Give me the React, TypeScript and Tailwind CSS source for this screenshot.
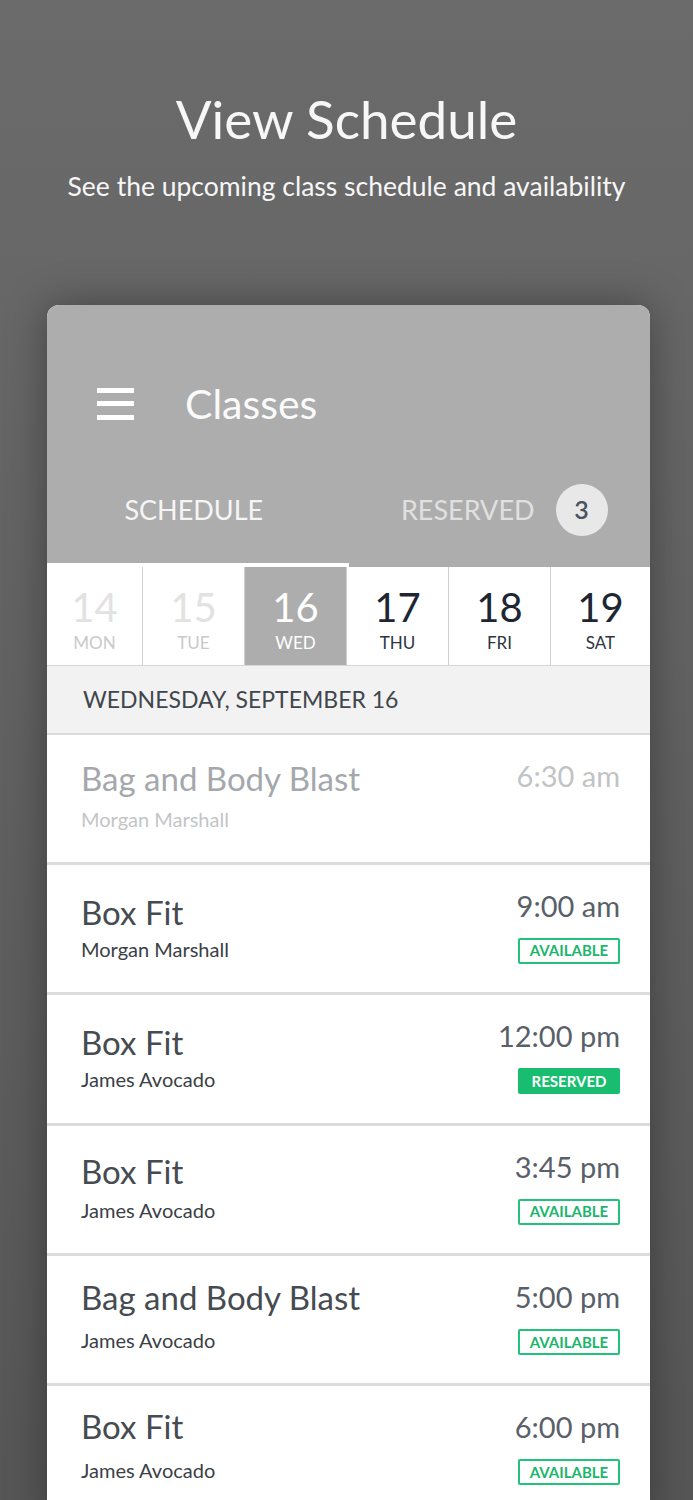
import { Fragment } from "react";

const days = [
  { n: "14", d: "MON", state: "past" },
  { n: "15", d: "TUE", state: "past" },
  { n: "16", d: "WED", state: "active" },
  { n: "17", d: "THU", state: "next" },
  { n: "18", d: "FRI", state: "next" },
  { n: "19", d: "SAT", state: "next" },
];

const classes = [
  { title: "Bag and Body Blast", coach: "Morgan Marshall", time: "6:30 am", status: "done", titleCls: "mt-[27px]", coachCls: "mt-[14px]" },
  { title: "Box Fit", coach: "Morgan Marshall", time: "9:00 am", status: "available", titleCls: "mt-[31px]", coachCls: "mt-[10px]" },
  { title: "Box Fit", coach: "James Avocado", time: "12:00 pm", status: "reserved", titleCls: "mt-[31px]", coachCls: "mt-[10px]" },
  { title: "Box Fit", coach: "James Avocado", time: "3:45 pm", status: "available", titleCls: "mt-[29px]", coachCls: "mt-[12px]" },
  { title: "Bag and Body Blast", coach: "James Avocado", time: "5:00 pm", status: "available", titleCls: "mt-[25px]", coachCls: "mt-[16px]" },
  { title: "Box Fit", coach: "James Avocado", time: "6:00 pm", status: "available", titleCls: "mt-[24px]", coachCls: "mt-[17px]" },
];

const DayCell = ({ n, d, state, last }: { n: string; d: string; state: string; last: boolean }) => {
  const bg = state === "active" ? "bg-[#adadad]" : "bg-white";
  const num =
    state === "past" ? "text-[#e2e2e2]" : state === "active" ? "text-white" : "text-[#1e2633]";
  const lbl =
    state === "past" ? "text-[#c9c9c9]" : state === "active" ? "text-white" : "text-[#2f3540]";
  return (
    <div className={`flex flex-col items-center pt-[20px] ${bg} ${last ? "" : "border-r border-[#d0d0d0]"}`}>
      <span className={`text-[40px] leading-none ${num}`}>{n}</span>
      <span className={`mt-[7px] text-[17px] leading-none ${lbl}`}>{d}</span>
    </div>
  );
};

const ClassRow = ({ c }: { c: (typeof classes)[number] }) => {
  const dim = c.status === "done";
  return (
    <div className="flex h-[130.4px] justify-between border-b-[3px] border-[#dcdcdc] bg-white pl-[34px] pr-[30px]">
      <div className="flex flex-col">
        <span className={`${c.titleCls} text-[33px] leading-none ${dim ? "text-[#a4a8ac]" : "text-[#454b51]"}`}>
          {c.title}
        </span>
        <span className={`${c.coachCls} text-[20px] leading-none ${dim ? "text-[#c3c5c7]" : "text-[#3a4046]"}`}>
          {c.coach}
        </span>
      </div>
      <div className="flex flex-col items-end">
        <span className={`mt-[26px] text-[29px] leading-none ${dim ? "text-[#c1c3c5]" : "text-[#596068]"}`}>
          {c.time}
        </span>
        {c.status === "available" && (
          <span className="mt-[18px] flex h-[26px] w-[102px] items-center justify-center rounded-[2px] border-2 border-[#22c27a] text-[15px] font-bold leading-none text-[#1db56d]">
            AVAILABLE
          </span>
        )}
        {c.status === "reserved" && (
          <span className="mt-[18px] flex h-[26px] w-[102px] items-center justify-center rounded-[2px] bg-[#18bd70] text-[15px] font-bold leading-none text-white">
            RESERVED
          </span>
        )}
      </div>
    </div>
  );
};

export default function App() {
  return (
    <div className="h-[1500px] overflow-hidden bg-gradient-to-b from-[#6b6b6b] to-[#565656] font-['Lato','Noto_Sans',sans-serif]">
      <div className="flex flex-col items-center pt-[92px] text-[#f7f7f7]">
        <h1 className="text-[53px] leading-none">View Schedule</h1>
        <p className="mt-[28px] text-[26.5px] leading-none">See the upcoming class schedule and availability</p>
      </div>

      <div className="ml-[47px] mt-[105px] w-[603px] overflow-hidden rounded-t-[12px] bg-white shadow-[0_0_40px_rgba(0,0,0,0.35)]">
        {/* header */}
        <div className="flex h-[262px] flex-col bg-[#adadad]">
          <div className="mt-[79px] flex h-[40px] items-center pl-[50px]">
            <div className="flex w-[37px] flex-col gap-[8.5px]">
              <span className="h-[5px] bg-white" />
              <span className="h-[5px] bg-white" />
              <span className="h-[5px] bg-white" />
            </div>
            <span className="ml-[51px] text-[41px] leading-none text-[#fafafa]">Classes</span>
          </div>
          <div className="mt-[60px] flex h-[52px]">
            <div className="flex w-1/2 items-center justify-center pr-[8px] text-[27px] leading-none text-[#f5f5f5]">
              SCHEDULE
            </div>
            <div className="flex w-1/2 items-center justify-center gap-[21px] pl-[10px]">
              <span className="text-[27px] leading-none text-[#e0e0e0]">RESERVED</span>
              <span className="flex h-[52px] w-[52px] items-center justify-center rounded-full bg-[#e8e8e8] text-[25px] font-semibold text-[#4b5260]">
                3
              </span>
            </div>
          </div>
          <div className="mt-auto h-[4px] w-1/2 bg-white" />
        </div>

        {/* days */}
        <div className="grid h-[99px] grid-cols-[96px_102px_102px_102px_102px_1fr] border-b border-[#d6d6d6]">
          {days.map((x, i) => (
            <Fragment key={x.n}>
              <DayCell n={x.n} d={x.d} state={x.state} last={i === days.length - 1} />
            </Fragment>
          ))}
        </div>

        <div className="flex h-[69px] items-center border-b-2 border-[#dcdcdc] bg-[#f2f2f2] pl-[36px] text-[23px] leading-none text-[#40464c]">
          WEDNESDAY, SEPTEMBER 16
        </div>

        {classes.map((c, i) => (
          <ClassRow key={i} c={c} />
        ))}
      </div>
    </div>
  );
}
